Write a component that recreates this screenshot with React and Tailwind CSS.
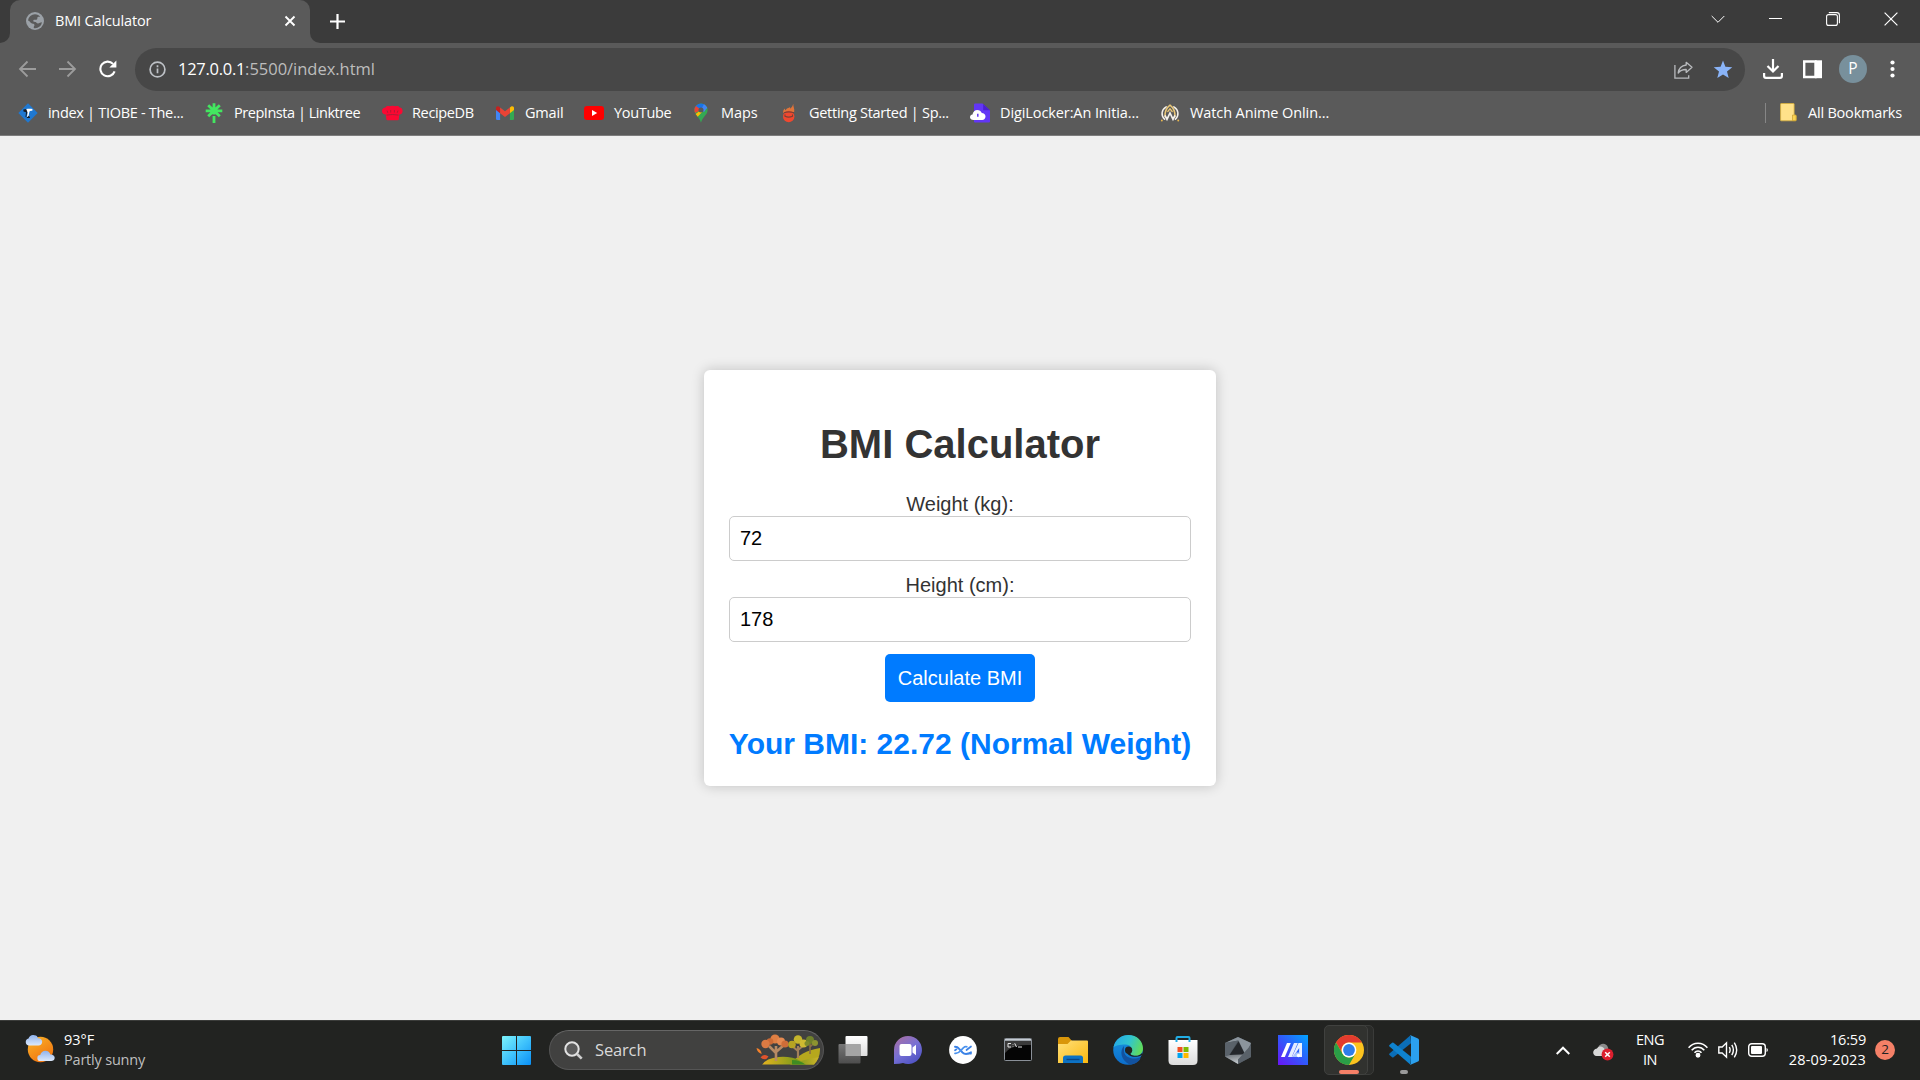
import React, { useState } from "react";

/* ---------- Bookmark icons (20x20) ---------- */
const Tiobe = () => (
  <svg width="20" height="20" viewBox="0 0 20 20">
    <path d="M10 0.3 19.7 10 10 19.7 0.3 10Z" fill="#1f78d1" />
    <path d="M5.300 6.500 8.500 6l1 2.500L8.200 14H7.500L8 9.200 5.500 8.600ZM10.500 13l1.500 1-.3 1H8.500l.8-1.200Z" fill="#141a24" />
    <path d="M8.300 6c2.200-.5 4.600-.4 6.200 0l-.3 1.900c-1.300-.4-2.200-.1-2.700.7l-.9 4.200-1.700 1.400.8-4.700-.6-1.200Z" fill="#fff" />
  </svg>
);
const Linktree = () => (
  <svg width="20" height="20" viewBox="0 0 20 20" fill="none" stroke="#43e660" strokeWidth="2.800">
    <path d="M10 0.3V11.500M10 13V20M1.700 7.800H18.300M4.200 2.300 10 7.800 15.800 2.300M4.200 13.300 10 7.800 15.800 13.300" />
  </svg>
);
const Recipe = () => (
  <svg width="21" height="20" viewBox="0 0 21 20">
    <path d="M3.800 11.600C1.300 11.500 0 10 0 8c0-2.200 1.600-3.600 3.500-3.600.9-1.300 2.600-1.700 4-1.100 1.700-.8 4.300-.8 6 0 1.700-.6 3.200-.2 4.100 1.100 2 .1 3 1.600 3 3.700 0 2.100-1.100 3.500-3.300 3.500l-.5 4.600q-.1 1-1.200 1H5.500q-1 0-1.100-1Z" fill="#fb0832" />
    <path d="M4.500 12.100q6-1.200 12 0M5 7.500l.8 2.300M8.700 7v2.500M12.400 7v2.500M16 7.500l-.8 2.300" stroke="#a31f38" strokeWidth=".9" fill="none" />
  </svg>
);
const Gmail = () => (
  <svg width="20" height="20" viewBox="0 0 20 20">
    <path d="M1 6.500 5.100 9.500V17H2.300Q1 17 1 15.700Z" fill="#4285f4" />
    <path d="M19 6.500 14.900 9.500V17h2.800Q19 17 19 15.700Z" fill="#34a853" />
    <path d="M14.900 4.600 16.200 3.600C17.400 2.700 19 3.500 19 5v2.100l-4.100 3.100Z" fill="#fbbc04" />
    <path d="M5.100 4.600 3.800 3.600C2.600 2.700 1 3.500 1 5v2.100l4.100 3.100Z" fill="#c5221f" />
    <path d="M5.100 4.600 10 8.300l4.900-3.700v5.600L10 13.900l-4.900-3.700Z" fill="#ea4335" />
  </svg>
);
const Youtube = () => (
  <svg width="20" height="20" viewBox="0 0 20 20">
    <rect x="0" y="3" width="20" height="14" rx="3" fill="#fe0000" />
    <path d="M8 7v6l5.200-3Z" fill="#fff" />
  </svg>
);
const Maps = () => (
  <svg width="20" height="20" viewBox="0 0 20 20">
    <defs>
      <clipPath id="pin">
        <path d="M10 .5a6.600 6.600 0 0 0-6.600 6.700c0 4.600 4.800 6 6.600 12.600 1.800-6.600 6.600-8 6.600-12.600A6.600 6.600 0 0 0 10 .5Z" />
      </clipPath>
    </defs>
    <g clipPath="url(#pin)">
      <path d="M0 0h20v20H0Z" fill="#34a853" />
      <path d="M10 7 16 0H5L2 4Z" fill="#1a73e8" />
      <path d="M10 7 13.500 0H20v4Z" fill="#4285f4" />
      <path d="M10 7 4.800 2.800 0 5v7Z" fill="#ea4335" />
      <path d="M10 7 2 13 5.500 15 14 6Z" fill="#fbbc04" />
      <path d="M10 7 13 9 18 2Z" fill="#4285f4" />
    </g>
    <circle cx="10" cy="7.100" r="2.500" fill="#5a5a5a" />
  </svg>
);
const Flame = () => (
  <svg width="20" height="20" viewBox="0 0 20 20">
    <path d="M14.300.8c-.4 2.500 1.500 4.800.9 8.200L4.300 10c-.5-1.800.2-3.600 1.600-4.600 0 1 .3 1.600.9 1.900C7.500 4.800 9.600 5.300 11 4c.2.600.1 1.300 0 1.800C12.600 4.700 13.700 3 14.300.8Z" fill="#e0743a" />
    <circle cx="9.700" cy="13.500" r="5.700" fill="#f0482f" />
    <path d="M5 9.800q4.800-1.800 9.800 0M6 11.500v1.800q3.700 1.600 7.500 0v-1.800" stroke="#7a4036" strokeWidth="1.100" fill="none" />
  </svg>
);
const Digi = () => (
  <svg width="20" height="20" viewBox="0 0 20 20">
    <path d="M4 1.500Q4 .5 5 .5h7.500L20 7.500v11q0 1-1 1H5q-1 0-1-1Z" fill="#6236f5" />
    <path d="M13.200 1v6.300H20Z" fill="#4c20cf" />
    <path d="M3.500 17C1.400 17 0 15.800 0 14.200c0-1.500 1.100-2.500 2.500-2.700C2.900 8.800 4.900 7 7.300 7c2.100 0 3.700 1.200 4.500 3.100 2 0 3.700 1.500 3.700 3.500 0 1.900-1.400 3.400-3.300 3.400Z" fill="#fff" />
    <path d="M7.800 10.800v3" stroke="#6236f5" strokeWidth="1.500" />
  </svg>
);
const Anime = () => (
  <svg width="20" height="20" viewBox="0 0 20 20" fill="none" strokeLinecap="round">
    <path d="M6.200 3.800C1.200 6.800.8 12.600 4.600 16.300M13.800 3.800c5 3 5.400 8.800 1.600 12.500" stroke="#f4f1ea" strokeWidth="1.500" />
    <path d="M5 13.500C4.800 8.500 7 4.500 10 2.200c3 2.300 5.200 6.300 5 11.300" stroke="#e9c778" strokeWidth="1.500" />
    <path d="M5.300 13 7 16.300 10 10l3 6.300 1.700-3.300" stroke="#f4f1ea" strokeWidth="1.700" />
    <path d="M7.800 8.500 10 5.800l2.200 2.700" stroke="#e9c778" strokeWidth="1.300" />
    <path d="M1.800 17.500h.1M18.200 17.500h.1" stroke="#e9b84f" strokeWidth="1.800" />
  </svg>
);

const BOOKMARKS = [
  { label: "index | TIOBE - The...", Icon: Tiobe, w: "w-[186px]", t: "tracking-[-0.3px]" },
  { label: "PrepInsta | Linktree", Icon: Linktree, w: "w-[178px]", t: "tracking-[-0.46px]" },
  { label: "RecipeDB", Icon: Recipe, w: "w-[113px]", t: "tracking-[-0.35px]" },
  { label: "Gmail", Icon: Gmail, w: "w-[89px]", t: "tracking-[-0.2px]" },
  { label: "YouTube", Icon: Youtube, w: "w-[107px]", t: "tracking-[-0.33px]" },
  { label: "Maps", Icon: Maps, w: "w-[88px]", t: "tracking-[-0.1px]" },
  { label: "Getting Started | Sp...", Icon: Flame, w: "w-[191px]", t: "tracking-[-0.28px]" },
  { label: "DigiLocker:An Initia...", Icon: Digi, w: "w-[190px]", t: "tracking-[-0.1px]" },
  { label: "Watch Anime Onlin...", Icon: Anime, w: "w-[180px]", t: "tracking-[-0.1px]" },
];

/* ---------- Browser chrome ---------- */
function TabStrip() {
  return (
    <div className="flex h-[43px] shrink-0 bg-[#3b3b3b]">
      <div className="flex w-[10px] items-end bg-[#5a5a5a]">
        <div className="h-full w-full rounded-br-[10px] bg-[#3b3b3b]" />
      </div>
      <div className="w-[300px] bg-[#3b3b3b]">
        <div className="flex h-full items-center rounded-t-[10px] bg-[#5a5a5a] pb-px pl-4 pr-[13px]">
          <svg width="18" height="18" viewBox="0 0 18 18">
            <circle cx="9" cy="9" r="9" fill="#9ba1a7" />
            <path d="M9 2c2.500 0 4 1 5.200 2.400-1 .2-2.200-.2-2.700.6-.5 1 .3 1.500-.6 2.200-1 .8-2.900-.2-3.600.9-.6 1.200 1.700 1.300 2.400 1.600 1 .5 1.200 1.500 2.300 1.400 1.300-.1 2.500-1 4-1.100A7 7 0 0 1 9 16c-.9 0-1.300-.1-1.300-1 0-1 .9-1.400.8-2.300C8.300 11 5.500 11.800 4.500 10.200 3.900 9.200 2.900 8.300 2 8.200A7 7 0 0 1 9 2Z" fill="#5a5a5a" transform="translate(0 0.300)" />
          </svg>
          <span className="ml-[11px] flex-1 pb-px text-[14.5px] leading-5 tracking-[-0.15px]">BMI Calculator</span>
          <svg width="14" height="14" viewBox="0 0 14 14" stroke="#fff" strokeWidth="1.900">
            <path d="m2.500 2.500 9 9M11.500 2.500l-9 9" />
          </svg>
        </div>
      </div>
      <div className="w-[10px] bg-[#5a5a5a]">
        <div className="h-full w-full rounded-bl-[10px] bg-[#3b3b3b]" />
      </div>
      <div className="flex flex-1 items-center pl-[9px]">
        <svg width="17" height="17" viewBox="0 0 17 17" stroke="#fff" strokeWidth="2.200">
          <path d="M8.500 1v15M1 8.500h15" />
        </svg>
      </div>
      <div className="flex h-[37px] items-center gap-[44px] pr-[22px] text-white">
        <svg width="14" height="14" viewBox="0 0 14 14" fill="none" stroke="currentColor" strokeWidth="1">
          <path d="m.7 4 6.300 6.300L13.300 4" />
        </svg>
        <svg width="13" height="14" viewBox="0 0 13 14" stroke="currentColor" strokeWidth="1">
          <path d="M0 6.500h13" />
        </svg>
        <svg width="14" height="14" viewBox="0 0 14 14" fill="none" stroke="currentColor" strokeWidth="1.100">
          <rect x=".6" y="2.600" width="10.800" height="10.800" rx="2" />
          <path d="M2.800.6h8q2.600 0 2.600 2.600v8" />
        </svg>
        <svg width="14" height="14" viewBox="0 0 14 14" stroke="currentColor" strokeWidth="1.200">
          <path d="m.6.6 12.800 12.800M13.400.6.6 13.400" />
        </svg>
      </div>
    </div>
  );
}

function Toolbar() {
  return (
    <div className="flex h-[53px] shrink-0 items-center pl-[18px] pr-[23px]">
      <svg className="-mt-px" width="19" height="18" viewBox="0 0 19 18" fill="none" stroke="#9c9c9c" strokeWidth="1.800">
        <path d="M18 9H2.500M9.500 1.500 2 9l7.500 7.500" />
      </svg>
      <svg className="-mt-px ml-[21px]" width="19" height="18" viewBox="0 0 19 18" fill="none" stroke="#9c9c9c" strokeWidth="1.800">
        <path d="M1 9h15.500M9.500 1.500 17 9l-7.500 7.500" />
      </svg>
      <svg className="-mt-px ml-[22px]" width="18" height="18" viewBox="0 0 18 18">
        <path d="M15.600 11.300A7.300 7.300 0 1 1 14 3.900" fill="none" stroke="#fff" strokeWidth="2.100" />
        <path d="M17.400.5v7h-7Z" fill="#fff" />
      </svg>
      <div className="ml-[18px] flex h-[43px] w-[1610px] items-center rounded-full bg-[#474747] pl-[14px] pr-[12px]">
        <svg width="17" height="17" viewBox="0 0 17 17" fill="none" stroke="#bdc1c6" strokeWidth="1.700">
          <circle cx="8.500" cy="8.500" r="7.400" />
          <path d="M8.500 7.500v4.800M8.500 4.300v1.900" />
        </svg>
        <div className="ml-[12px] flex-1 pb-px text-[16.5px] leading-6">
          <span className="tracking-[-0.28px] text-white">127.0.0.1</span>
          <span className="tracking-[-0.02px] text-[#bdbdbd]">:5500/index.html</span>
        </div>
        <svg width="19" height="18" viewBox="0 0 19 18" fill="none" stroke="#b9bbbe" strokeWidth="1.300">
          <path d="M.9 4v13.200h13.800v-3" />
          <path d="M12.200 1.300 18 6.300l-5.800 5.100V8.500C8.800 8.400 6.300 9.400 4.200 12 4.700 7.600 7.500 4.700 12.200 4Z" strokeLinejoin="round" />
        </svg>
        <svg className="ml-5" width="20" height="20" viewBox="0 0 20 20" fill="#8ab4f8">
          <path d="m10 .6 2.400 6.200 6.900.4-5.300 4.300 1.700 6.600L10 14.500l-5.700 3.600L6 11.500.7 7.200l6.900-.4Z" />
        </svg>
      </div>
      <svg className="-mt-px ml-[18px]" width="20" height="20" viewBox="0 0 20 20" fill="none" stroke="#fff" strokeWidth="2.200">
        <path d="M10 0v11.500M4.500 7 10 12.500 15.500 7M1.100 14v3q0 1.800 1.800 1.800h14.200q1.800 0 1.800-1.800V14" />
      </svg>
      <svg className="-mt-px ml-5" width="19" height="19" viewBox="0 0 19 19">
        <path d="M1.200 1.500h11.300v15.500H1.200Z" fill="none" stroke="#fff" strokeWidth="2.400" />
        <path d="M12 .3h7v17.900h-7Z" fill="#fff" />
      </svg>
      <div className="-mt-px ml-[17px] flex size-7 items-center justify-center rounded-full bg-[#78909c] text-[15.5px] leading-none">P</div>
      <svg className="-mt-px ml-[23px]" width="5" height="18" viewBox="0 0 5 18" fill="#fff">
        <circle cx="2.500" cy="2.500" r="2.100" />
        <circle cx="2.500" cy="9" r="2.100" />
        <circle cx="2.500" cy="15.500" r="2.100" />
      </svg>
    </div>
  );
}

function BookmarksBar() {
  return (
    <div className="flex h-[40px] shrink-0 items-center border-b border-[#7d7d7d] pb-[6px] pl-[18px] pr-[18px] text-[14.5px] leading-5">
      {BOOKMARKS.map(({ label, Icon, w, t }) => (
        <div key={label} className={`flex shrink-0 items-center ${w}`}>
          <span className="w-[30px] shrink-0">
            <Icon />
          </span>
          <span className={`whitespace-nowrap ${t}`}>{label}</span>
        </div>
      ))}
      <div className="ml-auto flex items-center">
        <div className="h-5 w-px bg-[#868686]" />
        <svg className="ml-[14px]" width="17" height="19" viewBox="0 0 17 19">
          <path d="M.6 1q0-.5.500-.5h12.500q.5 0 .5.500v10.500l2 1.500v4q0 .8-.8.800H1.100q-.5 0-.5-.5Z" fill="#ffe28a" stroke="#d9b13c" strokeWidth=".8" />
          <path d="M12.500 12h3.600v5.600h-3.600Z" fill="#fbd453" stroke="#c99f2e" strokeWidth=".7" />
        </svg>
        <span className="ml-[11px] whitespace-nowrap tracking-[-0.2px]">All Bookmarks</span>
      </div>
    </div>
  );
}

/* ---------- Page ---------- */
function Calculator() {
  const [weight, setWeight] = useState("72");
  const [height, setHeight] = useState("178");
  const field =
    "block h-[45px] w-full rounded-[5px] border border-[#ccc] bg-white px-[10px] font-['Liberation_Sans',Arial,sans-serif] text-[20px] leading-[23px] text-black outline-none";
  return (
    <div className="flex h-[416px] w-[512px] flex-col items-center rounded-[6px] bg-white px-[25px] pt-[52px] font-['Liberation_Sans',Arial,sans-serif] text-[20px] text-[#333] shadow-[0_0_12.5px_rgba(0,0,0,0.2)]">
      <h1 className="h-[72px] text-[40px] font-bold leading-[45px]">BMI Calculator</h1>
      <label className="h-[22px] leading-[21px]">Weight (kg):</label>
      <input className={field} value={weight} onChange={(e) => setWeight(e.target.value)} />
      <label className="mt-[14px] h-[22px] leading-[21px]">Height (cm):</label>
      <input className={field} value={height} onChange={(e) => setHeight(e.target.value)} />
      <button className="mt-3 h-12 w-[150px] shrink-0 whitespace-nowrap rounded-[5px] bg-[#007bff] text-white">Calculate BMI</button>
      <div className="mt-[25px] whitespace-nowrap text-[30px] font-bold leading-[33px] text-[#007bff]">Your BMI: 22.72 (Normal Weight)</div>
    </div>
  );
}

/* ---------- Taskbar icons ---------- */
const TaskView = () => (
  <svg width="30" height="30" viewBox="0 0 30 30">
    <defs>
      <linearGradient id="tv" x2="0" y2="1"><stop stopColor="#fff" /><stop offset="1" stopColor="#dedede" /></linearGradient>
      <linearGradient id="tv2" x2="0" y2="1"><stop stopColor="#777" /><stop offset="1" stopColor="#4d4d4d" /></linearGradient>
    </defs>
    <rect x="7.500" y="1" width="22" height="20" rx="1" fill="url(#tv)" />
    <rect x=".5" y="9" width="22" height="19.500" rx="1" fill="url(#tv2)" />
    <path d="M7.500 9h15v12h-15Z" fill="#a5a5a5" />
  </svg>
);
const Chat = () => (
  <svg width="30" height="30" viewBox="0 0 30 30">
    <defs>
      <linearGradient id="ch" x1=".1" y1=".1" x2=".7" y2="1"><stop stopColor="#a36fa9" /><stop offset=".5" stopColor="#7770d5" /><stop offset="1" stopColor="#4f53c4" /></linearGradient>
    </defs>
    <path d="M15 1a14 14 0 1 1-5 27.100Q7 29 1 29V15A14 14 0 0 1 15 1Z" fill="url(#ch)" />
    <rect x="6.500" y="9" width="12" height="12" rx="2" fill="#fff" />
    <path d="M19.500 12.500 23 9.700v10.600l-3.500-2.800Z" fill="#fff" />
  </svg>
);
const Share = () => (
  <svg width="30" height="30" viewBox="0 0 30 30" fill="none" strokeLinecap="round">
    <circle cx="15" cy="15" r="13.900" fill="#fff" />
    <path d="M7 11.800c1.800 0 3 .5 4.200 2L14.500 17.500c1.500 1.500 4.500 2.200 8.500-.2" stroke="#3b82e6" strokeWidth="1.900" />
    <path d="M7 18.300c2.500.3 4-.7 5.500-2.500l2.800-3c1.500-1.300 2.500-1.600 3.500-1" stroke="#4a92ee" strokeWidth="1.700" />
    <path d="M18.500 15 23 11.500M7 15.300l1.500-1M19 18.500l4 .2" stroke="#3b82e6" strokeWidth="1.700" />
  </svg>
);
const Cmd = () => (
  <svg width="30" height="30" viewBox="0 0 30 30">
    <rect x="1.500" y="3.500" width="27" height="22" rx=".8" fill="#050505" stroke="#8a9098" />
    <path d="M2 4h26v1.800H2Z" fill="#c5ccd3" />
    <path d="M2 6h26v4Q9 9 2 18Z" fill="#3a3a3a" />
    <path d="M8 8.500H5v3.500h3M10 9v.6M10 11.500v.6M11.700 8.300l1.800 3.700M15 12h4" stroke="#e5e5e5" fill="none" strokeWidth="1" />
  </svg>
);
const Explorer = () => (
  <svg width="30" height="30" viewBox="0 0 30 30">
    <defs>
      <linearGradient id="fe" x2="1" y2="1"><stop stopColor="#ffe07a" /><stop offset="1" stopColor="#fbb80f" /></linearGradient>
    </defs>
    <path d="M0 4q0-2 2-2h8.500l3.500 4H28v8H0Z" fill="#d9960a" />
    <path d="M0 9h9.500L13 5.500h16q1 0 1 1V28H0Z" fill="url(#fe)" />
    <path d="M5 28v-5q0-2.500 2.500-2.500h15Q25 20.500 25 23v5Z" fill="#0d72c4" />
    <path d="M8.500 24.500h13" stroke="#0a4686" strokeWidth="1.400" />
  </svg>
);
const Edge = () => (
  <svg width="30" height="30" viewBox="0 0 30 30">
    <defs>
      <linearGradient id="eg" x1="0" y1=".3" x2="1" y2=".6"><stop stopColor="#25a9e6" /><stop offset=".5" stopColor="#31c5cf" /><stop offset="1" stopColor="#63dd54" /></linearGradient>
      <linearGradient id="eb" x2="0" y2="1"><stop stopColor="#1896e0" /><stop offset="1" stopColor="#0d6dcb" /></linearGradient>
    </defs>
    <circle cx="15" cy="15" r="14.800" fill="url(#eb)" />
    <path d="M.5 12.500C2 4.500 8.500 0 15.500 0 24 0 30 6 30 13.500c0 4.500-3.200 7.300-7.500 7.300-4 0-5.300-1.500-4.800-2.800 2.500-3.500.4-8.500-5.200-8.500C7 9.500 2 10.500.5 12.500Z" fill="url(#eg)" />
    <path d="M11 11c-4.500 4.500-3.500 14 5.500 18.500 5 .2 9-2.500 11.500-6.500.3-.7-.3-1.100-.8-.8-7 3.300-16.500.3-16.200-7Z" fill="#12529f" />
    <path d="M29 20c-1.300.9-2.500 1.300-3.800 1.500-7.500 1.500-12.500-2.500-11.500-6.500.3 1.200 2.200 2.500 3.800 3-.5 1.600 1.500 2.800 5 2.800 3 0 5-.9 6.500-2.800Z" fill="#20211f" />
    <path d="M27.500 22.500 30 18v7l-3 2.500Z" fill="#222321" />
    <circle cx="15.600" cy="15.200" r="3.600" fill="#222321" />
  </svg>
);
const Store = () => (
  <svg width="30" height="30" viewBox="0 0 30 30">
    <defs><linearGradient id="st" x2="0" y2="1"><stop stopColor="#fff" /><stop offset="1" stopColor="#dcdcdc" /></linearGradient></defs>
    <path d="M.5 5h29v20.500q0 4.500-4.500 4.500H5Q.5 30 .5 25.500Z" fill="url(#st)" />
    <path d="M8.500 7V3q0-1 1-1h11q1 0 1 1v4" fill="none" stroke="#22aee6" strokeWidth="2" />
    <path d="M9.500 12h5v5h-5Z" fill="#f25022" />
    <path d="M15.500 12h5v5h-5Z" fill="#7fba00" />
    <path d="M9.500 18h5v5h-5Z" fill="#00a4ef" />
    <path d="M15.500 18h5v5h-5Z" fill="#ffb900" />
  </svg>
);
const Hex = () => (
  <svg width="30" height="30" viewBox="0 0 30 30">
    <defs><linearGradient id="hx" x2=".3" y2="1"><stop stopColor="#6b7177" /><stop offset="1" stopColor="#c3c8cc" /></linearGradient></defs>
    <path d="M15 2 28 8v14L15 29 2 21.500V8Z" fill="#4e565e" />
    <path d="M15 2 28 8 22.500 20 15.500 5.500 2 8Z" fill="#8b949c" />
    <path d="M2 8l13-2.500L6 20.500 2 21.500Z" fill="#5a626a" />
    <path d="M15.500 6.500 22 19.500 6.500 20Z" fill="#24272b" />
    <path d="M2 21.500 6.500 20 22 19.500 15 24.500V29Z" fill="url(#hx)" />
    <path d="M15 24.500 28 10v12L15 29Z" fill="#596169" />
  </svg>
);
const MyAsus = () => (
  <svg width="30" height="30" viewBox="0 0 30 30">
    <defs><linearGradient id="my" x1="1" y1="0" x2="0" y2="1"><stop stopColor="#00a5ff" /><stop offset=".5" stopColor="#3159fb" /><stop offset="1" stopColor="#6b14f5" /></linearGradient></defs>
    <path d="M0 0h30v30H0Z" fill="url(#my)" />
    <path d="M9 8h3.800L6.800 22H3Z" fill="#fff" />
    <path d="M16 8h3.800l-6 14H10Z" fill="#e5ecff" />
    <path d="M20.500 8H24v14h-3l.2-9-6.200 9h-1Z" fill="#fff" opacity=".9" />
    <path d="M14.500 22 18 17.500h3.500V22Z" fill="#a9c6ff" />
    <circle cx="20.500" cy="20.500" r="1.700" fill="#fff" />
  </svg>
);
const Chrome = () => (
  <svg width="30" height="30" viewBox="0 0 30 30">
    <circle cx="15" cy="15" r="15" fill="#fcc31e" />
    <path d="M2 7.500A15 15 0 0 1 28 7.500H15a7.500 7.500 0 0 0-6.500 11.300Z" fill="#e33b2e" />
    <path d="M2 7.500 8.500 18.750A7.500 7.500 0 0 0 21.500 18.750L15 30A15 15 0 0 1 2 7.500Z" fill="#2a9e47" />
    <circle cx="15" cy="15" r="7.400" fill="#fff" />
    <circle cx="15" cy="15" r="5.900" fill="#2f7de9" />
  </svg>
);
const VsCode = () => (
  <svg width="30" height="30" viewBox="0 0 30 30">
    <path d="M21.500.3 22 8.200 4.500 22.200q-.7.500-1.400 0L.5 20q-.8-.8 0-1.600Z" fill="#0b6eb8" />
    <path d="M21.500 29.700 22 21.800 4.500 7.800q-.7-.5-1.400 0L.5 10q-.8.800 0 1.600Z" fill="#0f83cf" />
    <path d="M21.500.3 29 3.500q1 .5 1 1.600V25q0 1.100-1 1.600l-7.500 3.100Q20.500 30 22 28.500V1.500Q20.500 0 21.500.3Z" fill="#2ba0ee" />
  </svg>
);

const APPS = [
  ["task-view", TaskView],
  ["chat", Chat],
  ["quick-share", Share],
  ["cmd", Cmd],
  ["explorer", Explorer],
  ["edge", Edge],
  ["store", Store],
  ["armoury", Hex],
  ["myasus", MyAsus],
];

const SearchArt = () => (
  <svg width="64" height="32" viewBox="0 0 64 32">
    <defs>
      <linearGradient id="hill" x2="1" y2="0"><stop stopColor="#e5b31f" /><stop offset=".6" stopColor="#7d9a1b" /><stop offset="1" stopColor="#d3b52a" /></linearGradient>
      <clipPath id="hc"><path d="M0 0h64v16q0 8-6 14.600H6L0 28Z" /></clipPath>
    </defs>
    <g clipPath="url(#hc)">
      <path d="M34 31Q44 17 64 14v17Z" fill="#b6a81d" />
      <path d="M6 31q4-7 17-8 12-1 22 4 10-3 19-4v8Z" fill="url(#hill)" />
      <path d="M36 26q8 0 14 5H36Z" fill="#3f8c22" />
      <path d="M20 27V12M20 19l-7-7M20 18l8-7" stroke="#b88a63" strokeWidth="2.600" fill="none" />
      <path d="M42 24V12M42 17l-6-5M42 16l6-5" stroke="#a3805a" strokeWidth="2.200" fill="none" />
      <path d="M54 20V9M54 13l4-4" stroke="#8c6f45" strokeWidth="1.600" fill="none" />
      <circle cx="19" cy="5" r="4.600" fill="#df7f43" />
      <circle cx="14" cy="7.500" r="3.300" fill="#cd6a35" />
      <circle cx="25" cy="7.500" r="4" fill="#e58a51" />
      <circle cx="9.500" cy="10" r="4.200" fill="#db7a43" />
      <circle cx="29" cy="10" r="3.600" fill="#cf6d38" />
      <circle cx="42" cy="5.500" r="4.300" fill="#c5b52c" />
      <circle cx="36" cy="10.500" r="3.800" fill="#b6a322" />
      <circle cx="47.500" cy="9.500" r="4" fill="#d0ba31" />
      <circle cx="54" cy="6" r="4" fill="#70812a" />
      <circle cx="59" cy="9" r="3" fill="#8d9430" />
      <circle cx="51" cy="9.500" r="2.500" fill="#7f8a2c" />
    </g>
    <path d="M.5 14q4.500 1 5.200 6Q1 18.500.5 14Z" fill="#f4812a" />
    <path d="M4.500 23.500q4-4.500 8-1-3 5-8 1Z" fill="#e0532c" />
  </svg>
);

function Taskbar() {
  return (
    <div className="flex h-[60px] shrink-0 items-center border-t border-[#3b3c3a] bg-[#222321] pb-px text-[14.5px] text-white">
      <div className="flex w-[502px] items-center pl-[25px]">
        <svg className="-mt-[3px]" width="30" height="30" viewBox="0 0 30 30">
          <defs>
            <linearGradient id="sun" x2=".6" y2="1"><stop stopColor="#fbb62a" /><stop offset="1" stopColor="#f0740f" /></linearGradient>
            <linearGradient id="cl" x2="0" y2="1"><stop stopColor="#8fb3ee" /><stop offset="1" stopColor="#dde9fb" /></linearGradient>
          </defs>
          <circle cx="15.500" cy="15.500" r="12.700" fill="url(#sun)" />
          <path d="M3.500 11.500a3.600 3.600 0 0 1 0-7C4.500 1.500 7 .3 9.300 1.200c1.700-.3 3.300 1 3.600 3 2.500-.2 4.300 1.400 4.300 3.600s-1.700 3.700-3.700 3.700Z" fill="url(#cl)" />
          <path d="M15.500 27a3 3 0 0 1-.3-6c.7-2.600 2.600-4.200 5.200-4.200s4.400 1.500 5 3.700c2.300-.2 4.300 1.100 4.300 3.200s-1.600 3.300-3.600 3.300Z" fill="url(#cl)" />
        </svg>
        <div className="ml-[9px] leading-5">
          <div>93°F</div>
          <div className="tracking-[-0.2px] text-[#bfbfbf]">Partly sunny</div>
        </div>
      </div>
      <svg width="29" height="29" viewBox="0 0 29 29">
        <defs><linearGradient id="win" gradientUnits="userSpaceOnUse" x1="0" y1="0" x2="29" y2="29"><stop stopColor="#7df3fb" /><stop offset=".5" stopColor="#40c3fc" /><stop offset="1" stopColor="#0a8ff5" /></linearGradient></defs>
        <path d="M0 1q0-1 1-1h13v14H0ZM15 0h13q1 0 1 1v13H15ZM0 15h14v14H1q-1 0-1-1ZM15 15h14v13q0 1-1 1H15Z" fill="url(#win)" />
      </svg>
      <div className="ml-[18px] flex h-10 w-[275px] items-center rounded-full border border-[#555] border-t-[#666] bg-[#414140] pl-[14px] pr-[3px]">
        <svg width="19" height="19" viewBox="0 0 19 19" fill="none">
          <circle cx="8" cy="8" r="6.700" fill="#5b5b5b" stroke="#e2e2e2" strokeWidth="2" />
          <path d="m13 13 4.700 4.700" stroke="#d0d0d0" strokeWidth="2.600" />
        </svg>
        <span className="ml-3 flex-1 text-[16.5px] leading-6 tracking-[-0.15px] text-[#d9d9d9]">Search</span>
        <SearchArt />
      </div>
      <div className="ml-px flex items-center">
        {APPS.map(([name, Icon]) => (
          <div key={name} className="flex w-[55px] justify-center">
            <Icon />
          </div>
        ))}
      </div>
      <div className="relative ml-[4px] flex h-[50px] w-[50px] justify-start">
        <div className="absolute inset-y-0 left-4 right-0 rounded-[5px] border border-[#3a3b39] bg-[#2b2c2a]" />
        <div className="relative flex h-full w-11 flex-col items-center rounded-[5px] border border-[#40413f] bg-[#31322f] pt-[9px]">
          <div className="pl-[5px]"><Chrome /></div>
          <div className="ml-[5px] mt-[5px] h-1 w-5 shrink-0 rounded-full bg-[#f58067]" />
        </div>
      </div>
      <div className="ml-[15px] flex h-[50px] flex-col items-center pt-[10px]">
        <VsCode />
        <div className="mt-[5px] h-1 w-2 shrink-0 rounded-full bg-[#9a9a9a]" />
      </div>
      <div className="ml-auto flex items-center pr-[25px]">
        <svg width="14" height="9" viewBox="0 0 14 9" fill="none" stroke="#fff" strokeWidth="2">
          <path d="m.7 8 6.300-6.300L13.300 8" />
        </svg>
        <svg className="ml-[23px] mt-[3px]" width="21" height="18" viewBox="0 0 21 18">
          <path d="M5 4.500C7-.5 13.500-.5 15 4.500l1 6H5Z" fill="#8b8b8b" />
          <path d="M3.500 13C-1 13-1 6 4 5.500 6 2.500 10 3 11.500 6l-1 7Z" fill="#d7d7d7" />
          <circle cx="14.500" cy="11.500" r="5.900" fill="#dc1f2e" />
          <path d="m12.200 9.200 4.600 4.600M16.800 9.200l-4.600 4.600" stroke="#fff" strokeWidth="1.500" />
        </svg>
        <div className="ml-[19px] mr-px w-[34px] text-center leading-5 tracking-[-0.5px]">
          <div>ENG</div>
          <div>IN</div>
        </div>
        <svg className="ml-[20px]" width="20" height="16" viewBox="0 0 20 16" fill="none" stroke="#fff" strokeWidth="1.500">
          <path d="M.6 5.800C5.500-.4 14.500-.4 19.400 5.800M3.700 8.300c3.300-4.200 9.300-4.200 12.600 0M6.500 10.800c1.900-2.400 5.100-2.400 7 0" />
          <circle cx="10" cy="13.300" r="1.700" fill="#fff" />
        </svg>
        <svg className="ml-[10px]" width="20" height="18" viewBox="0 0 20 18" fill="none" stroke="#fff" strokeWidth="1.400">
          <path d="M.8 6h3.400l4.300-4.200v14.400L4.200 12H.8ZM11.300 6.200q1.700 2.800 0 5.600M13.800 3.900q3.200 5.100 0 10.200M16.300 1.700q4.800 7.300 0 14.600" />
        </svg>
        <svg className="ml-[10px]" width="20" height="14" viewBox="0 0 20 14">
          <rect x=".7" y=".7" width="16.600" height="12.600" rx="3" fill="none" stroke="#fff" strokeWidth="1.400" />
          <rect x="3" y="3" width="11" height="8" rx="1" fill="#fff" />
          <path d="M18.500 5v4q1.400-.5 1.400-2t-1.400-2Z" fill="#fff" />
        </svg>
        <div className="ml-[18px] w-20 text-right leading-5">
          <div className="tracking-[-0.2px]">16:59</div>
          <div className="tracking-[0.15px]">28-09-2023</div>
        </div>
        <div className="ml-[9px] flex size-5 items-center justify-center rounded-full bg-[#f58067] text-[13.5px] leading-none text-[#222]">2</div>
      </div>
    </div>
  );
}

export default function App() {
  return (
    <div className="flex h-[1080px] w-[1920px] flex-col overflow-hidden bg-[#f0f0f0] font-['Open_Sans','Noto_Sans',sans-serif] text-white">
      <div className="flex h-[136px] shrink-0 flex-col bg-[#5a5a5a]">
        <TabStrip />
        <Toolbar />
        <BookmarksBar />
      </div>
      <main className="flex flex-1 items-center justify-center">
        <Calculator />
      </main>
      <Taskbar />
    </div>
  );
}
